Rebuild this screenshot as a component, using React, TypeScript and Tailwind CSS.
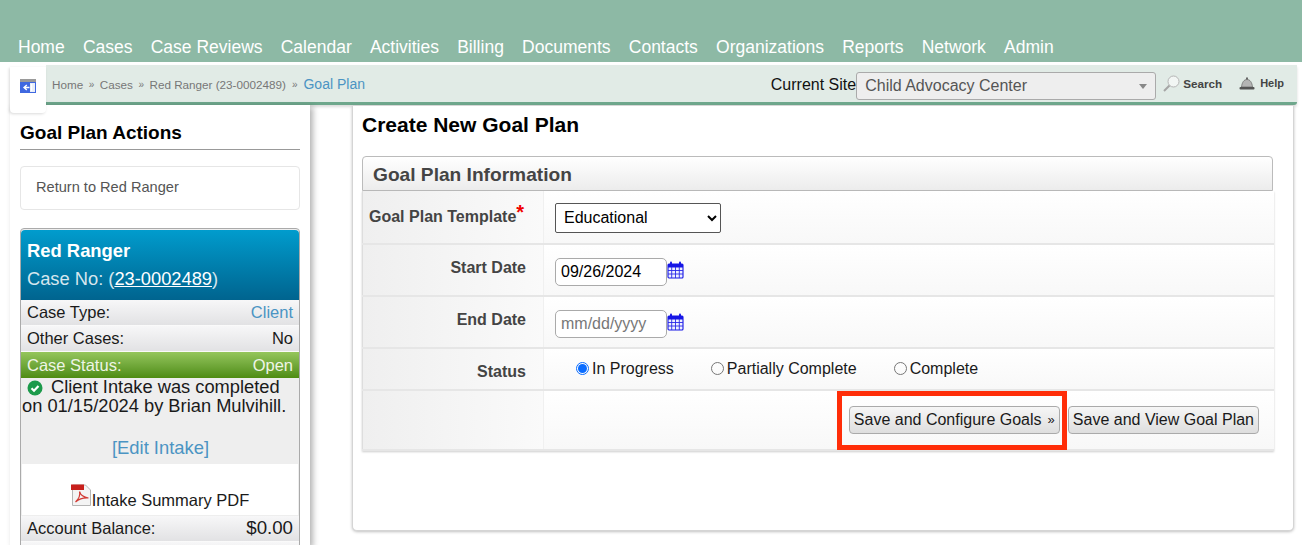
import React from "react";

const navItems = ["Home", "Cases", "Case Reviews", "Calendar", "Activities", "Billing", "Documents", "Contacts", "Organizations", "Reports", "Network", "Admin"];

function CalendarIcon() {
  return (
    <svg width="17" height="18" viewBox="0 0 17 18" className="ml-[0px] mt-[3px] shrink-0">
      <rect x="1" y="3" width="15" height="14" rx="1" fill="#eef0ff" stroke="#1616e6" strokeWidth="1.1" />
      <rect x="1" y="3" width="15" height="3.5" fill="#1616e6" />
      <path d="M1 9.5h15M1 13h15M4.7 6v11M8.5 6v11M12.3 6v11" stroke="#2a2ae8" strokeWidth="0.9" />
      <rect x="3" y="0.5" width="2" height="4" rx="1" fill="#1616e6" />
      <rect x="12" y="0.5" width="2" height="4" rx="1" fill="#1616e6" />
    </svg>
  );
}

function FormRow({ label, children }: { label: React.ReactNode; children: React.ReactNode }) {
  return (
    <div className="flex border-b-2 border-[#e6e6e6]">
      <div className="w-[181px] shrink-0 bg-gradient-to-r from-[#efefef] to-[#fafafa] border-l border-[#dddddd] text-[#444444] font-bold text-[16px]">
        {label}
      </div>
      <div className="flex-1 bg-gradient-to-b from-[#ffffff] to-[#f8f8f8] border-l border-[#f0f0f0]">{children}</div>
    </div>
  );
}

function InfoRow({ label, value, valueClass }: { label: string; value: string; valueClass?: string }) {
  return (
    <div className="h-[26px] flex items-center justify-between px-[6px] bg-gradient-to-b from-[#f7f7f8] to-[#e2e2e4] text-[16.5px] text-[#1a1a1a] border-b border-[#fafafa]">
      <span>{label}</span>
      <span className={valueClass}>{value}</span>
    </div>
  );
}

export default function App() {
  return (
    <div className="relative w-[1302px] h-[545px] overflow-hidden bg-white font-['Liberation_Sans',Arial,sans-serif]">
      {/* top nav */}
      <div className="h-[62px] bg-[#8db9a5] flex items-end pl-[18px] pb-[4px] gap-[18.2px] text-white text-[17.5px] leading-[22px]">
        {navItems.map((n) => (
          <span key={n}>{n}</span>
        ))}
      </div>

      {/* breadcrumb bar */}
      <div className="mt-[3px] ml-[46px] mr-[5px] h-[40px] bg-[#e1ebe6] border-b-[3px] border-[#6ea78c] rounded-br-[3px] flex items-center pl-[6px] text-[#777777] text-[11.7px] shadow-[0_2px_3px_rgba(0,0,0,0.15)]">
        <span className="mt-[2px]">Home</span>
        <span className="mx-[5.5px] mt-[2px] text-[10px]">»</span>
        <span className="mt-[2px]">Cases</span>
        <span className="mx-[5.5px] mt-[2px] text-[10px]">»</span>
        <span className="mt-[2px]">Red Ranger (23-0002489)</span>
        <span className="mx-[6px] mt-[2px] text-[10px]">»</span>
        <span className="text-[#4b94c3] text-[14px] mt-[1px]">Goal Plan</span>
        <span className="ml-auto mt-[2px] text-[16px] text-[#111111]">Current Site</span>
        <div className="w-[300px] h-[28px] mt-[5px] border border-[#aaaaaa] rounded-[3px] bg-[#eeeeee] flex items-center justify-between pl-[8px] pr-[8px] text-[16px] text-[#555555]">
          <span>Child Advocacy Center</span>
          <span className="w-0 h-0 border-x-[4px] border-x-transparent border-t-[5px] border-t-[#888888]" />
        </div>
        <svg width="18" height="18" viewBox="0 0 18 18" className="ml-[6px]">
          <circle cx="11.5" cy="6.5" r="5.5" fill="#f2f6f4" stroke="#b5b5b5" />
          <path d="M7.5 10.5l-5.5 5.5" stroke="#a5a5a5" strokeWidth="2" />
        </svg>
        <span className="ml-[3px] text-[11.7px] font-bold text-[#444444]">Search</span>
        <svg width="16" height="14" viewBox="0 0 16 14" className="ml-[17px]">
          <path d="M8 2.500c-3.200 0-5 3-5.500 7.500h11C13 5.500 11.200 2.500 8 2.500z" fill="#b5b5b5" stroke="#666666" strokeWidth="0.7" />
          <rect x="7" y="0.500" width="2" height="2" fill="#666666" />
          <rect x="0.500" y="10" width="15" height="2.500" rx="1" fill="#555555" />
        </svg>
        <span className="ml-[5px] mr-[13px] text-[11px] font-bold text-[#444444]">Help</span>
      </div>

      {/* collapse tab */}
      <div className="absolute left-[10px] top-[67px] w-[36px] h-[46px] bg-white rounded-b-[4px] shadow-[-1px_1px_3px_rgba(0,0,0,0.15)] z-10 flex items-center justify-center pb-[9px]">
        <svg width="16" height="14" viewBox="0 0 16 14">
          <rect x="0" y="0" width="16" height="14" fill="#e8eef9" />
          <rect x="0" y="0" width="16" height="3" fill="#9a9a9a" />
          <rect x="0" y="3" width="10" height="11" fill="#3f68e0" />
          <rect x="0.500" y="3.500" width="15" height="10" fill="none" stroke="#3f68e0" />
          <path d="M9.500 8.500H5M6.800 6L4 8.500l2.800 2.500M11.500 5v7" stroke="#ffffff" strokeWidth="1.400" fill="none" />
        </svg>
      </div>

      <div className="flex">
        {/* sidebar */}
        <aside className="ml-[10px] w-[300px] h-[441px] bg-white px-[10px] shadow-[3px_2px_6px_rgba(0,0,0,0.3)] shrink-0">
          <h2 className="mt-[17px] h-[28px] text-[19px] leading-[22px] font-bold text-black border-b border-[#999999]">Goal Plan Actions</h2>
          <div className="mt-[16px] h-[44px] border border-[#e6e6e6] rounded-[4px] flex items-center pl-[15px] text-[14.6px] text-[#555555]">Return to Red Ranger</div>

          <div className="mt-[18px] border border-[#aaaaaa] rounded-[4px] overflow-hidden bg-[#eeeeee]">
            <div className="h-[70px] bg-gradient-to-b from-[#019ccd] to-[#00648f] text-white px-[6px] pt-[11px] mt-[1px] rounded-t-[4px]">
              <div className="text-[18.4px] leading-[20px] font-bold">Red Ranger</div>
              <div className="mt-[8px] text-[18.3px] leading-[20px] text-[#d6e6ee]">
                Case No: (<span className="underline text-white">23-0002489</span>)
              </div>
            </div>
            <div>
              <InfoRow label="Case Type:" value="Client" valueClass="text-[#4b94c3]" />
              <InfoRow label="Other Cases:" value="No" />
              <div className="h-[26px] flex items-center justify-between px-[6px] bg-gradient-to-b from-[#95c65c] to-[#4e8c10] text-[16.5px] text-[#eef5e6]">
                <span>Case Status:</span>
                <span>Open</span>
              </div>
              <div className="-mt-[1px] text-[18.3px] leading-[19px] text-[#1a1a1a] h-[87px] pl-[1px]">
                <span className="inline-flex align-[-3px] ml-[5px] mr-[8px]">
                  <svg width="16" height="16" viewBox="0 0 16 16">
                    <circle cx="8" cy="8" r="7.500" fill="#1c9a4b" />
                    <path d="M4.500 8.200l2.500 2.500 4.500-4.700" stroke="#fff" strokeWidth="2.200" fill="none" />
                  </svg>
                </span>
                Client Intake was completed on 01/15/2024 by Brian Mulvihill.
                <div className="mt-[23px] text-center text-[#4b94c3] text-[18.400px] leading-[20px]">[Edit Intake]</div>
              </div>
              <div className="h-[52px] bg-white mx-[1px] flex items-end justify-center pb-[6px] text-[16.500px] leading-[18px] text-[#1a1a1a] border-b border-[#eeeeee]">
                <svg width="21" height="22" viewBox="0 0 21 22" className="mb-[3px]">
                  <path d="M1.500 1h13l5 5v15.500h-18z" fill="#f4f4f4" stroke="#b5b5b5" />
                  <rect x="0" y="0.500" width="13" height="5.500" fill="#c8201c" />
                  <path d="M4.500 18c3.500-3.500 5-7 4-10.500 1 3.500 3.500 5.800 9 6.500-5.500-.4-9.500 1-13 4z" fill="none" stroke="#d23a34" strokeWidth="1.200" />
                </svg>
                <span>Intake Summary PDF</span>
              </div>
              <InfoRow label="Account Balance:" value="$0.00" valueClass="text-[18.700px]" />
              <div className="h-[20px] bg-gradient-to-b from-[#f7f7f8] to-[#e2e2e4]" />
            </div>
          </div>
        </aside>

        {/* main panel */}
        <main className="ml-[42px] mt-[1px] mr-[8px] flex-1 h-[425px] bg-white border border-t-0 border-[#d5d5d5] rounded-b-[5px] shadow-[0_1px_3px_rgba(0,0,0,0.25)] px-[9px]">
          <h1 className="mt-[7px] text-[21px] leading-[24px] font-bold text-black">Create New Goal Plan</h1>
          <div className="mt-[19px] mr-[11px] h-[35px] border border-[#bbbbbb] rounded-t-[4px] bg-gradient-to-b from-[#ffffff] to-[#ececec] flex items-center pl-[10px] pt-[3px] text-[19.150px] font-bold text-[#444444]">
            Goal Plan Information
          </div>
          <div className="mr-[10px] shadow-[0_1px_2px_rgba(0,0,0,0.2)]">
            <FormRow
              label={
                <div className="pl-[6px] pt-[12px] leading-[18px]">
                  Goal Plan Template<span className="text-[#f00000] text-[20px] align-[3px]">*</span>
                </div>
              }
            >
              <div className="h-[52px] flex items-start pl-[11px] pt-[12px]">
                <select defaultValue="Educational" className="w-[166px] h-[30px] bg-white border border-[#555555] rounded-[2px] pl-[4px] pb-[2px] text-[16px] text-black">
                  <option>Educational</option>
                </select>
              </div>
            </FormRow>
            <FormRow label={<div className="pt-[14px] pr-[17px] text-right leading-[18px]">Start Date</div>}>
              <div className="h-[50px] flex items-start pl-[11px] pt-[13px]">
                <div className="w-[112px] h-[28px] bg-white border border-[#aaaaaa] rounded-[5px] pl-[5px] flex items-center text-[16px] text-black">09/26/2024</div>
                <CalendarIcon />
              </div>
            </FormRow>
            <FormRow label={<div className="pt-[14px] pr-[17px] text-right leading-[18px]">End Date</div>}>
              <div className="h-[50px] flex items-start pl-[11px] pt-[13px]">
                <div className="w-[112px] h-[28px] bg-white border border-[#aaaaaa] rounded-[5px] pl-[5px] flex items-center text-[16px] text-[#777777]">mm/dd/yyyy</div>
                <CalendarIcon />
              </div>
            </FormRow>
            <FormRow label={<div className="pt-[14px] pr-[17px] text-right leading-[18px]">Status</div>}>
              <div className="h-[40px] flex items-center pl-[32px] text-[16px] text-[#1a1a1a] pb-[1px]">
                <span className="w-[13px] h-[13px] rounded-full border border-[#0a6cff] flex items-center justify-center mr-[3px]">
                  <span className="w-[9px] h-[9px] rounded-full bg-[#0a6cff]" />
                </span>
                <span>In Progress</span>
                <span className="w-[13px] h-[13px] rounded-full border border-[#777777] ml-[37px] mr-[3px]" />
                <span>Partially Complete</span>
                <span className="w-[13px] h-[13px] rounded-full border border-[#777777] ml-[37px] mr-[3px]" />
                <span>Complete</span>
              </div>
            </FormRow>
            <FormRow label={<div className="h-[58px]" />}>
              <div className="h-[58px] flex items-start justify-end pr-[15px] pt-[15px] gap-[8px]">
                <button className="h-[28px] w-[211px] px-[4px] flex items-center justify-between border border-[#aaaaaa] rounded-[4px] bg-gradient-to-b from-[#f6f6f6] to-[#dedede] text-[16px] text-[#1a1a1a] whitespace-nowrap">
                  <span>Save and Configure Goals</span>
                  <span className="text-[13px]">»</span>
                </button>
                <button className="h-[28px] px-[4px] border border-[#aaaaaa] rounded-[4px] bg-gradient-to-b from-[#f6f6f6] to-[#dedede] text-[16px] text-[#1a1a1a] whitespace-nowrap">Save and View Goal Plan</button>
              </div>
            </FormRow>
          </div>
        </main>
      </div>

      {/* red annotation box */}
      <div className="absolute left-[837px] top-[391px] w-[230px] h-[59px] border-[5px] border-[#ff2d08]" />
    </div>
  );
}
